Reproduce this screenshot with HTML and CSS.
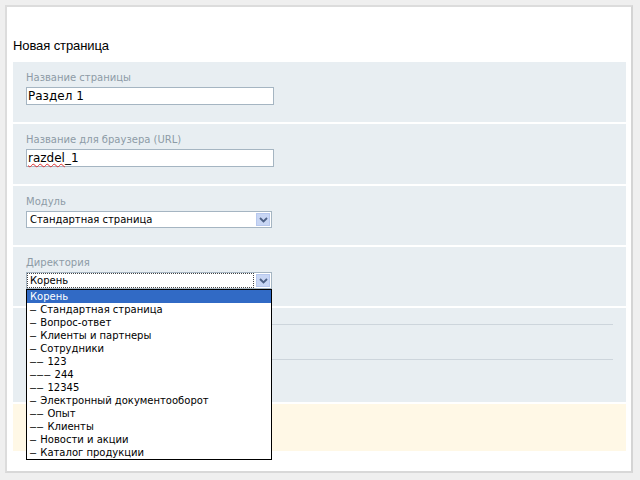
FILE: index.html
```html
<!DOCTYPE html>
<html lang="ru">
<head>
<meta charset="utf-8">
<title>Новая страница</title>
<link rel="stylesheet" href="styles.css">
</head>
<body>
<div class="panel">
  <h1 class="title">Новая страница</h1>
  <div class="section">
    <div class="label">Название страницы</div>
    <div class="input">Раздел 1</div>
  </div>
  <div class="section">
    <div class="label">Название для браузера (URL)</div>
    <div class="input"><span class="spell">razdel</span>_1</div>
  </div>
  <div class="section">
    <div class="label">Модуль</div>
    <div class="select">
      <span class="select-text">Стандартная страница</span>
      <span class="arrow"><svg width="9" height="6" viewBox="0 0 9 6"><path d="M1 1 L4.5 4.5 L8 1" fill="none" stroke="#4d6185" stroke-width="1.8"/></svg></span>
    </div>
  </div>
  <div class="section">
    <div class="label">Директория</div>
    <div class="select-wrap">
      <div class="select">
        <span class="select-text focus">Корень</span>
        <span class="arrow"><svg width="9" height="6" viewBox="0 0 9 6"><path d="M1 1 L4.5 4.5 L8 1" fill="none" stroke="#4d6185" stroke-width="1.8"/></svg></span>
      </div>
      <ul class="listbox">
        <li class="selected">Корень</li>
        <li><span class="dash">–</span> Стандартная страница</li>
        <li><span class="dash">–</span> Вопрос-ответ</li>
        <li><span class="dash">–</span> Клиенты и партнеры</li>
        <li><span class="dash">–</span> Сотрудники</li>
        <li><span class="dash">––</span> 123</li>
        <li><span class="dash">–––</span> 244</li>
        <li><span class="dash">––</span> 12345</li>
        <li><span class="dash">–</span> Электронный документооборот</li>
        <li><span class="dash">––</span> Опыт</li>
        <li><span class="dash">––</span> Клиенты</li>
        <li><span class="dash">–</span> Новости и акции</li>
        <li><span class="dash">–</span> Каталог продукции</li>
      </ul>
    </div>
  </div>
  <div class="section section-lines">
    <div class="rule"></div>
    <div class="rule"></div>
  </div>
  <div class="section section-yellow"></div>
</div>
</body>
</html>
```

FILE: styles.css
```css
html, body {
  margin: 0;
  padding: 0;
}
body {
  background: #efefef;
  font-family: "DejaVu Sans", Verdana, sans-serif;
  width: 640px;
  height: 480px;
  overflow: hidden;
}
.panel {
  box-sizing: border-box;
  margin: 5px 0 0 5px;
  width: 628px;
  height: 468px;
  background: #ffffff;
  border-top: 2px solid #dcdcdc;
  border-left: 2px solid #dcdcdc;
  border-right: 2px solid #d4d4d4;
  border-bottom: 2px solid #d8d8d8;
  padding: 31px 5px 0 6px;
}
.title {
  margin: 0 0 8px 0;
  font-family: "Liberation Sans", Arial, sans-serif;
  font-size: 13px;
  line-height: 16px;
  font-weight: normal;
  color: #000;
  letter-spacing: -0.1px;
}
.section {
  background: #e8eef2;
  margin-bottom: 2px;
  padding: 9px 13px 17px 13px;
}
.label {
  font-size: 10px;
  line-height: 13px;
  color: #8d9ba6;
  margin-bottom: 3px;
}
.input {
  box-sizing: border-box;
  width: 248px;
  height: 18px;
  border: 1px solid #a5b5c2;
  background: #fff;
  font-size: 12px;
  line-height: 16px;
  padding-left: 1px;
  color: #000;
}
.spell {
  text-decoration: underline wavy #e03030;
  text-decoration-thickness: 1px;
}
.select-wrap {
  position: relative;
  width: 246px;
}
.select {
  box-sizing: border-box;
  width: 246px;
  height: 17px;
  border: 1px solid #a5b5c2;
  background: #fff;
  display: flex;
  align-items: stretch;
}
.select-text {
  flex: 1;
  font-size: 10px;
  line-height: 15px;
  padding-left: 3px;
  color: #000;
}
.select-text.focus {
  outline: 1px dotted #444;
  outline-offset: -1px;
  margin: 0 1px 0 0;
}
.arrow {
  width: 14px;
  margin: 1px;
  box-sizing: border-box;
  background: #c8d6f4;
  border: 1px solid #b7c8ee;
  display: flex;
  align-items: center;
  justify-content: center;
}
.listbox {
  position: absolute;
  left: 0;
  top: 17px;
  box-sizing: border-box;
  width: 246px;
  margin: 0;
  padding: 0;
  list-style: none;
  background: #fff;
  border: 1px solid #000;
  z-index: 2;
}
.listbox li {
  font-size: 10px;
  line-height: 13px;
  height: 13px;
  padding-left: 3px;
  color: #000;
  white-space: nowrap;
}
.listbox .dash {
  font-family: "Liberation Sans", Arial, sans-serif;
  font-size: 11px;
  letter-spacing: 1px;
}
.listbox li.selected {
  background: #316ac5;
  color: #fff;
}
.section-lines {
  padding: 16px 13px 0 13px;
  height: 78px;
}
.rule {
  height: 1px;
  background: #cdd5dc;
  margin-bottom: 34px;
}
.section-yellow {
  background: #fff8e6;
  padding: 0;
  height: 47px;
}
```
